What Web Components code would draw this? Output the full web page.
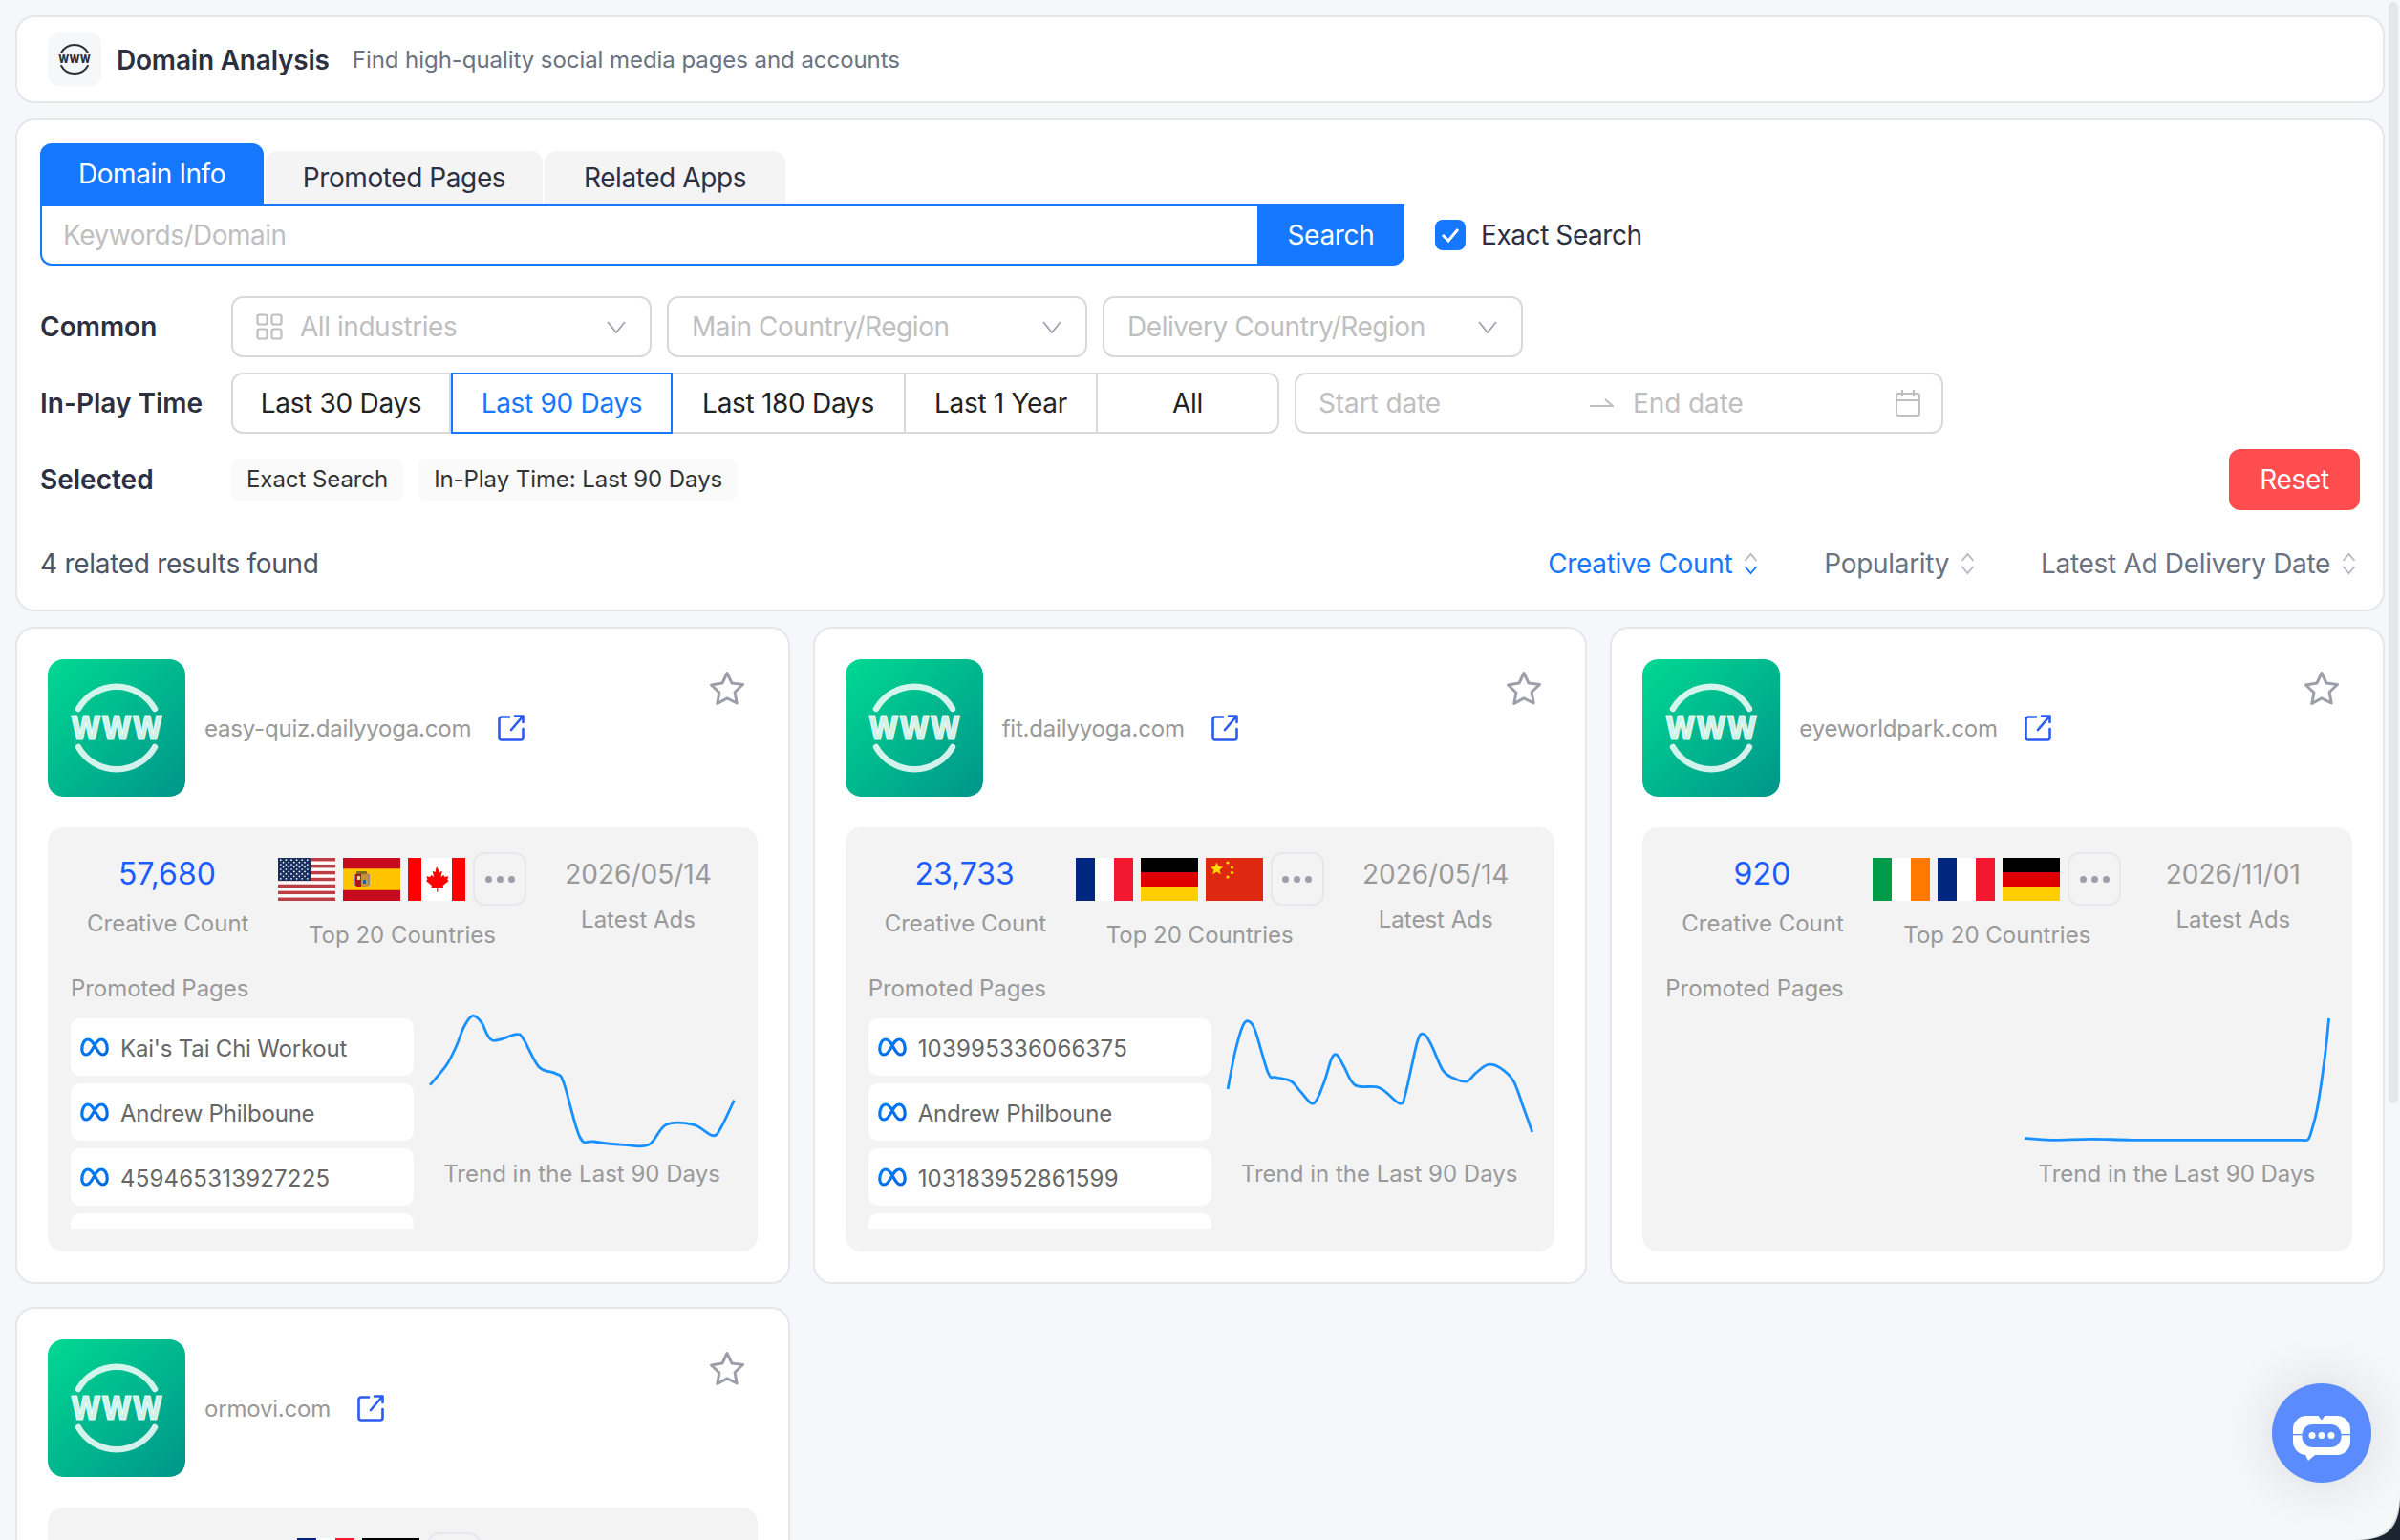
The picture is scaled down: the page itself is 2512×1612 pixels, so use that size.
<!DOCTYPE html>
<html lang="en">
<head>
<meta charset="utf-8">
<title>Domain Analysis</title>
<style>
html,body{margin:0;height:1612px;overflow:hidden;background:#f6f7f9}
body{font-family:Inter,"Liberation Sans",sans-serif;font-size:28px;color:#2c3040}
</style>
</head>
<body>
<app-page>
  <page-header heading="Domain Analysis" subtitle="Find high-quality social media pages and accounts"></page-header>
  <filter-panel></filter-panel>
  <card-grid>
    <domain-card domain="easy-quiz.dailyyoga.com" count="57,680" date="2026/05/14" flags="us,es,ca"
      chart="0,75.7 17.2,55 27.6,35 35.5,15 44.4,3.3 53.8,10 65.3,29 90.4,22.7 98.2,28.3 114,56.7 132.2,64 140,73.3 156.8,130 171.4,135 202.8,138.3 229,138.3 247.3,117.3 276,117.3 296,128.7 304.8,120 318.4,91.7">
      <page-row>Kai's Tai Chi Workout</page-row><page-row>Andrew Philboune</page-row><page-row num>459465313927225</page-row><page-row blank></page-row>
    </domain-card>
    <domain-card domain="fit.dailyyoga.com" count="23,733" date="2026/05/14" flags="fr,de,cn"
      chart="0.1,80 8,40 16,13.3 22.3,9.3 29.2,20 42.4,63.3 50.4,67.7 66.3,71.7 76.8,83.3 90,95 100.7,73.3 108.6,48.3 114.4,44.3 121.9,56.7 133.5,76 158.9,78.7 180,95 186.4,83.3 198.6,30 205.5,22.7 212.9,33.3 225,60 235.7,68.3 250,72 259.5,63.3 272.7,54.3 286,58.3 299.2,71.7 309.8,100 318.8,125">
      <page-row num>103995336066375</page-row><page-row>Andrew Philboune</page-row><page-row num>103183952861599</page-row><page-row blank></page-row>
    </domain-card>
    <domain-card domain="eyeworldpark.com" count="920" date="2026/11/01" flags="ie,fr,de"
      chart="0,131.3 27.8,133.3 70,132.3 112.7,133.3 180,133.3 240,133.3 275,133.3 290,133.3 296.5,133 300,125 306.4,100 314.3,46.7 318.6,6">
    </domain-card>
    <domain-card domain="ormovi.com" flags="fr,de" partial></domain-card>
  </card-grid>
</app-page>
<scroll-thumb></scroll-thumb>
<chat-fab></chat-fab>
<window-corner></window-corner>

<script>
const def = (name, render, after) => customElements.define(name, class extends HTMLElement {
  connectedCallback() {
    if (this.shadowRoot) return;
    const r = this.attachShadow({mode: 'open'});
    r.innerHTML = render(this);
    if (after) after(this, r);
  }
});
const attr = (el, n, d = '') => el.hasAttribute(n) ? el.getAttribute(n) : d;

const wwwMark = (color, op = 1, sw = 6.5, ts = 1.2) => `
  <g fill="none" stroke="${color}" stroke-opacity="${op}" stroke-width="${sw}" stroke-linecap="round">
    <path d="M32 52A46 46 0 0 1 112 52"/><path d="M32 92A46 46 0 0 0 112 92"/>
  </g>
  <text x="72" y="84" text-anchor="middle" textLength="96" lengthAdjust="spacingAndGlyphs"
    font-family="Inter,'Liberation Sans',sans-serif" font-weight="800" font-size="34" fill="${color}" fill-opacity="${op}" stroke="${color}" stroke-opacity="${op}" stroke-width="${ts}" stroke-linejoin="round">WWW</text>`;

def('app-page', () => `<style>:host{display:flex;flex-direction:column;gap:16px;padding:16px 16px 0;width:2480px}</style><slot></slot>`);

def('page-header', el => `<style>
  :host{display:flex;align-items:center;box-sizing:border-box;height:92px;background:#fff;border:2px solid #e5e7eb;border-radius:20px;padding:0 32px}
  .tile{width:56px;height:56px;background:#f6f7f9;border-radius:12px;display:flex;align-items:center;justify-content:center;margin-right:16px}
  h1{margin:2px 0 0;font:600 28px/40px Inter,sans-serif;letter-spacing:-.2px;color:#2c3040}
  p{margin:2px 0 0 24px;font:400 24px/36px Inter,sans-serif;letter-spacing:-.06px;color:#6b7280}
  </style>
  <div class="tile"><svg width="50" height="50" viewBox="0 0 144 144">${wwwMark('#2b2f3a',1,6,0)}</svg></div>
  <h1>${attr(el,'heading')}</h1><p>${attr(el,'subtitle')}</p>`);

const chevron = `<svg width="20" height="13" viewBox="0 0 20 13" fill="none" stroke="#9ca3af" stroke-width="1.8"><path d="M1 1l9 11L19 1"/></svg>`;

def('select-box', el => `<style>
  :host{display:flex;align-items:center;box-sizing:border-box;width:440px;height:64px;border:2px solid #d9d9d9;border-radius:12px;padding:0 25px 0 24px;color:#bfbfbf;font:400 28px/40px Inter,sans-serif;letter-spacing:-.45px;background:#fff}
  span{flex:1;white-space:nowrap}
  svg.g{margin-right:18px;flex:none}
  </style>
  ${el.hasAttribute('grid') ? `<svg class="g" width="28" height="28" viewBox="0 0 28 28" fill="none" stroke="#bfbfbf" stroke-width="2.2"><rect x="1.5" y="1.5" width="10" height="10" rx="2"/><rect x="16.5" y="1.5" width="10" height="10" rx="2"/><rect x="1.5" y="16.5" width="10" height="10" rx="2"/><rect x="16.5" y="16.5" width="10" height="10" rx="2"/></svg>` : ''}
  <span>${attr(el,'label')}</span>${chevron}`);

def('seg-btn', el => `<style>
  :host{display:flex;align-items:center;justify-content:center;box-sizing:border-box;height:64px;width:${attr(el,'w')}px;border:2px solid #d9d9d9;border-left-width:0;color:#222;font:400 28px/40px Inter,sans-serif;letter-spacing:-.3px;white-space:nowrap;background:#fff}
  :host([first]){border-left-width:2px;border-radius:12px 0 0 12px}
  :host([last]){border-radius:0 12px 12px 0}
  :host([active]){border:2px solid #1677ff;color:#1677ff}
  </style><slot></slot>`);

def('date-range', () => `<style>
  :host{display:flex;align-items:center;box-sizing:border-box;width:679px;height:64px;border:2px solid #d9d9d9;border-radius:12px;padding:0 22px 0 23px;color:#bfbfbf;font:400 28px/40px Inter,sans-serif;letter-spacing:-.1px;background:#fff;margin-left:16px}
  .a{width:285px}.c{width:276px}
  svg{flex:none}
  .arrow{margin-right:20px}
  </style>
  <span class="a">Start date</span>
  <svg class="arrow" width="25" height="12" viewBox="0 0 25 12" fill="none" stroke="#bfbfbf" stroke-width="2"><path d="M0 9h24L16 2"/></svg>
  <span class="c">End date</span>
  <svg width="26" height="28" viewBox="0 0 26 28" fill="none" stroke="#bfbfbf" stroke-width="2"><rect x="1" y="4" width="24" height="23" rx="2"/><path d="M1 11h24M7 0v7M19 0v7"/></svg>`);

def('filter-row', el => `<style>
  :host{display:flex;align-items:center;min-height:64px}
  b{width:200px;flex:none;font:600 28px/40px Inter,sans-serif;letter-spacing:0;color:#2c3040}
  .c{display:flex;align-items:center;flex:1}
  </style><b>${attr(el,'label')}</b><div class="c"><slot></slot></div>`);

def('tag-chip', () => `<style>
  :host{display:flex;align-items:center;height:44px;box-sizing:border-box;padding:0 16px;background:#fafafa;border-radius:8px;font:400 24px/36px Inter,sans-serif;letter-spacing:-.07px;color:#333;margin-right:16px;white-space:nowrap}
  </style><slot></slot>`);

def('sort-item', el => `<style>
  :host{display:flex;align-items:center;gap:12px;font:400 28px/40px Inter,sans-serif;letter-spacing:-.32px;color:#6b7280;white-space:nowrap}
  :host([active]){color:#1677ff}
  </style><slot></slot>
  <svg width="15" height="24" viewBox="0 0 15 24" fill="none" stroke-width="1.8"><path d="M1.5 9L7.5 2l6 7" stroke="#b5b9c2"/><path d="M1.5 15l6 7 6-7" stroke="${el.hasAttribute('active') ? '#1677ff' : '#b5b9c2'}"/></svg>`);

def('filter-panel', () => `<style>
  :host{display:block;box-sizing:border-box;height:516px;background:#fff;border:2px solid #e5e7eb;border-radius:20px;padding:24px}
  .tabs{display:flex;align-items:flex-end;height:64px}
  .tab{box-sizing:border-box;height:56px;background:#f4f4f5;border-radius:12px 12px 0 0;display:flex;align-items:center;justify-content:center;font:400 28px/40px Inter,sans-serif;letter-spacing:-.42px;color:#2c3040}
  .tab.on{height:64px;background:#1677ff;color:#fff;width:234px}
  .tab.p{width:290px;margin-left:2px}.tab.r{width:252px;margin-left:2px}
  .search{display:flex;align-items:center;height:64px}
  .input{box-sizing:border-box;width:1274px;height:64px;border:2px solid #1677ff;border-right:0;border-radius:0 0 0 12px;padding:0 22px;display:flex;align-items:center;color:#bfbfbf;font:400 28px/40px Inter,sans-serif;letter-spacing:-.5px}
  .btn{width:154px;height:64px;background:#1677ff;color:#fff;border-radius:0 0 12px 0;display:flex;align-items:center;justify-content:center;font:400 28px/40px Inter,sans-serif;letter-spacing:-.3px}
  .check{display:flex;align-items:center;margin-left:32px;font:400 28px/40px Inter,sans-serif;letter-spacing:-.42px;color:#2c3040}
  .box{width:32px;height:32px;background:#1677ff;border-radius:8px;margin-right:16px;display:flex;align-items:center;justify-content:center}
  .rows{display:flex;flex-direction:column;gap:16px;margin-top:32px}
  select-box+select-box{margin-left:16px}
  .reset{margin-left:auto;width:137px;height:64px;background:#ff4d4f;color:#fff;border-radius:12px;display:flex;align-items:center;justify-content:center;font:400 28px/40px Inter,sans-serif;letter-spacing:-.3px}
  .foot{display:flex;align-items:center;justify-content:space-between;height:40px;margin-top:36px;font:400 28px/40px Inter,sans-serif;letter-spacing:-.28px;color:#4b5563}
  .sorts{display:flex;gap:69px;padding-right:4px}
  </style>
  <div class="tabs"><div class="tab on">Domain Info</div><div class="tab p">Promoted Pages</div><div class="tab r">Related Apps</div></div>
  <div class="search"><div class="input">Keywords/Domain</div><div class="btn">Search</div>
    <div class="check"><span class="box"><svg width="20" height="16" viewBox="0 0 20 16" fill="none" stroke="#fff" stroke-width="3"><path d="M2 8l6 6L18 2"/></svg></span>Exact Search</div></div>
  <div class="rows">
    <filter-row label="Common"><select-box grid label="All industries"></select-box><select-box label="Main Country/Region"></select-box><select-box label="Delivery Country/Region"></select-box></filter-row>
    <filter-row label="In-Play Time"><seg-btn first w="230">Last 30 Days</seg-btn><seg-btn active w="232">Last 90 Days</seg-btn><seg-btn w="244">Last 180 Days</seg-btn><seg-btn w="201">Last 1 Year</seg-btn><seg-btn last w="190">All</seg-btn><date-range></date-range></filter-row>
    <filter-row label="Selected"><tag-chip>Exact Search</tag-chip><tag-chip>In-Play Time: Last 90 Days</tag-chip><span style="flex:1"></span><div class="reset">Reset</div></filter-row>
  </div>
  <div class="foot"><span>4 related results found</span><div class="sorts"><sort-item active>Creative Count</sort-item><sort-item>Popularity</sort-item><sort-item>Latest Ad Delivery Date</sort-item></div></div>`);

def('card-grid', () => `<style>:host{display:grid;grid-template-columns:repeat(3,1fr);gap:24px;align-items:start}</style><slot></slot>`);

const flagArt = {
  us: `<rect width="60" height="45" fill="#fff"/><g fill="#bd3d44">${[0,2,4,6,8,10,12].map(i=>`<rect y="${(i*45/13).toFixed(2)}" width="60" height="3.46"/>`).join('')}</g><rect width="34" height="24" fill="#192f5d"/><g fill="#fff">${[...Array(9)].flatMap((_,r)=>[...Array(r%2?5:6)].map((_,c)=>`<circle cx="${(r%2?5.6:2.8)+c*5.6}" cy="${2.2+r*2.45}" r=".85"/>`)).join('')}</g>`,
  es: `<rect width="60" height="45" fill="#c60b1e"/><rect y="11.25" width="60" height="22.5" fill="#ffc400"/><rect x="13" y="16" width="13" height="14" rx="2" fill="#ad1519"/><rect x="19" y="16" width="7" height="14" fill="#c8913a"/><rect x="14" y="14" width="11" height="3" fill="#8a6a20"/><rect x="11" y="17" width="2" height="12" fill="#8d8d8d"/><rect x="26" y="17" width="2" height="12" fill="#8d8d8d"/><rect x="15" y="19" width="3" height="4" fill="#e8d8a0"/><rect x="21" y="23" width="3" height="4" fill="#2b5b9a"/>`,
  ca: `<rect width="60" height="45" fill="#fff"/><rect width="14" height="45" fill="#f00"/><rect x="46" width="14" height="45" fill="#f00"/><path fill="#f00" d="M30 9l3.2 6 2.600-1.300-1.200 6.400 2.600-2.400 1.200 2.200 3.800-.6-1 3.600 1.600 1-6.200 5 .6 2.600-6-.6.3 4.600h-1.400l.3-4.600-6 .6.6-2.600-6.200-5 1.600-1-1-3.600 3.800.6 1.200-2.200 2.600 2.400-1.200-6.400 2.600 1.300z"/>`,
  fr: `<rect width="20" height="45" fill="#00267f"/><rect x="20" width="20" height="45" fill="#fff"/><rect x="40" width="20" height="45" fill="#f31830"/>`,
  de: `<rect width="60" height="15" fill="#000"/><rect y="15" width="60" height="15" fill="#d00"/><rect y="30" width="60" height="15" fill="#ffce00"/>`,
  ie: `<rect width="20" height="45" fill="#009a49"/><rect x="20" width="20" height="45" fill="#fff"/><rect x="40" width="20" height="45" fill="#ff7900"/>`,
  cn: `<rect width="60" height="45" fill="#de2910"/><g fill="#ffde00"><path d="M11.500 4.500l1.900 4.600 4.900.3-3.800 3.100 1.300 4.800-4.300-2.700-4.200 2.700 1.200-4.800L4.700 9.400l4.900-.3z"/><circle cx="23" cy="5" r="1.600"/><circle cx="27.500" cy="10" r="1.600"/><circle cx="27.500" cy="15.500" r="1.600"/><circle cx="23" cy="20" r="1.600"/></g>`
};
def('flag-icon', el => `<style>:host{display:block;width:60px;height:45px;flex:none}svg{display:block}</style><svg width="60" height="45" viewBox="0 0 60 45">${flagArt[attr(el,'code')]||''}</svg>`);

def('trend-chart', el => {
  const p = attr(el,'points').trim().split(/\s+/).map(s => s.split(',').map(Number));
  let d = `M${p[0]}`;
  for (let i = 0; i < p.length - 1; i++) {
    const a = p[i-1] || p[i], b = p[i], c = p[i+1], e = p[i+2] || c, t = 1/6;
    d += `C${(b[0]+(c[0]-a[0])*t).toFixed(1)} ${(b[1]+(c[1]-a[1])*t).toFixed(1)} ${(c[0]-(e[0]-b[0])*t).toFixed(1)} ${(c[1]-(e[1]-b[1])*t).toFixed(1)} ${c[0]} ${c[1]}`;
  }
  return `<style>:host{display:block;width:320px;height:140px}svg{display:block;overflow:visible}</style>
  <svg width="320" height="140" viewBox="0 0 320 140"><path d="${d}" fill="none" stroke="#1890ff" stroke-width="2.8" stroke-linejoin="round"/></svg>`;
});

def('page-row', el => `<style>
  :host{display:flex;align-items:center;flex:none;height:60px;background:#fff;border-radius:10px;padding-left:10px;gap:12px;font:400 24px/36px Inter,sans-serif;letter-spacing:-.2px;color:#666;white-space:nowrap}
  :host([num]){letter-spacing:.2px}
  span{padding-top:3px}
  svg{flex:none}
  </style>
  ${el.hasAttribute('blank') ? '' : `<svg width="30" height="20" viewBox="0 0 30 20" fill="none" stroke-width="3.200" stroke-linejoin="round"><defs><linearGradient id="m" x1="0" x2="1" y1="0" y2="1"><stop offset="0" stop-color="#0081fb"/><stop offset="1" stop-color="#0064e1"/></linearGradient></defs><path stroke="url(#m)" d="M1.800 12.500C1.800 6 4.500 2 8 2c3.500 0 5.500 3.500 8.500 9 2.500 4.500 4.500 7 7 7 2.800 0 4.700-2.500 4.700-6.500C28.200 6 25.500 2 22 2c-3.500 0-5.500 3.500-8.500 9-2.500 4.500-4.500 7-7 7-2.800 0-4.700-2.500-4.700-5.500z"/></svg>
  <span><slot></slot></span>`}`);

def('domain-card', el => {
  const partial = el.hasAttribute('partial');
  const flags = attr(el,'flags').split(',').map(c => `<flag-icon code="${c}"></flag-icon>`).join('');
  const more = `<div class="more"><i></i><i></i><i></i></div>`;
  const lower = `
    <div class="lower">
      <div class="left"><div class="plabel">Promoted Pages</div><div class="list"><slot></slot></div></div>
      <div class="right"><trend-chart points="${attr(el,'chart')}"></trend-chart><div class="tlabel">Trend in the Last 90 Days</div></div>
    </div>`;
  const stats = partial
    ? `<div class="stats"><div class="c1"></div><div class="c2 shift"><div class="flags">${flags}${more}</div></div></div>`
    : `<div class="stats">
        <div class="c1"><div class="num">${attr(el,'count')}</div><div class="lab">Creative Count</div></div>
        <div class="c2"><div class="flags">${flags}${more}</div><div class="lab">Top 20 Countries</div></div>
        <div class="c3"><div class="date">${attr(el,'date')}</div><div class="lab">Latest Ads</div></div>
      </div>${lower}`;
  return `<style>
  :host{display:block;box-sizing:border-box;background:#fff;border:2px solid #e5e7eb;border-radius:20px;padding:32px;height:688px;min-width:0}
  .top{display:flex;align-items:center;height:144px;position:relative}
  .logo{width:144px;height:144px;border-radius:16px;flex:none;display:block}
  .dom{margin:2px 0 0 20px;font:400 24px/36px Inter,sans-serif;letter-spacing:-.2px;color:#999;white-space:nowrap}
  .ext{margin-left:28px;flex:none}
  .star{position:absolute;right:13px;top:12px}
  .box{margin-top:32px;height:444px;background:#f3f3f4;border-radius:16px;padding-top:26px;box-sizing:border-box}
  .stats{display:flex;gap:32px;height:125px;padding-left:41px;text-align:center}
  .c1{width:168px;flex:none}.c2{width:260px;flex:none}.c3{width:160px;flex:none;margin-left:5px}
  .shift{margin-left:20px}
  .num{font:400 32px/48px Inter,sans-serif;color:#1a5cff;margin-top:-1px}
  .date{font:400 28px/48px Inter,sans-serif;color:#999;margin-top:-1px;white-space:nowrap}
  .lab{font:400 24px/36px Inter,sans-serif;color:#999;white-space:nowrap}
  .c1 .lab{margin-top:10px}.c2 .lab{margin-top:13px}.c3 .lab{margin-top:6px}
  .flags{display:flex;align-items:center;gap:8px;height:56px}
  .more{box-sizing:border-box;width:56px;height:56px;border:2px solid #e6e7ee;border-radius:12px;display:flex;align-items:center;justify-content:center;gap:5px;flex:none}
  .more i{width:7px;height:7px;border-radius:50%;background:#9d9ea9}
  .lower{display:flex;gap:17px;padding-left:24px}
  .left{width:359px;flex:none}
  .plabel{font:400 24px/36px Inter,sans-serif;letter-spacing:-.05px;color:#999}
  .list{margin-top:13px;height:220px;overflow:hidden;display:flex;flex-direction:column;gap:8px}
  .right{padding-top:43px;width:320px}
  .tlabel{margin:11px 0 0 -2px;font:400 24px/36px Inter,sans-serif;color:#999;text-align:center;white-space:nowrap}
  </style>
  <div class="top">
    <svg class="logo" viewBox="0 0 144 144"><defs><linearGradient id="g" x1="0" y1="0" x2="1" y2="1"><stop offset="0" stop-color="#00d992"/><stop offset="1" stop-color="#00958a"/></linearGradient></defs><rect width="144" height="144" rx="16" fill="url(#g)"/>${wwwMark('#fff',.83)}</svg>
    <span class="dom">${attr(el,'domain')}</span>
    <svg class="ext" width="28" height="28" viewBox="0 0 28 28" fill="none" stroke="#2b5bf0" stroke-width="2.600" stroke-linecap="round" stroke-linejoin="round"><path d="M12 2.500H4A2.500 2.500 0 0 0 1.500 5v19A2.500 2.500 0 0 0 4 26.500h20a2.500 2.500 0 0 0 2.500-2.500V15"/><path d="M18 1.500h8.500V8M26 2L14 16"/></svg>
    <svg class="star" width="38" height="38" viewBox="0 0 38 38" fill="none" stroke="#9d9ea9" stroke-width="3" stroke-linejoin="round"><path d="M19 2.500l5 10.500 11.500 1.500-8.400 8 2.100 11.500L19 28.900 8.800 34.500l2.100-11.500-8.400-8L14 13z"/></svg>
  </div>
  <div class="box">${stats}</div>`;
});

def('scroll-thumb', () => `<style>:host{position:absolute;left:2500px;top:2px;width:10px;height:1153px;background:#e6e7eb;border-radius:5px}</style>`);

def('chat-fab', () => `<style>
  :host{position:absolute;left:2378px;top:1448px;width:104px;height:104px;border-radius:50%;background:#5a8cff;box-shadow:0 0 60px rgba(30,35,60,.14);display:flex;align-items:center;justify-content:center}
  svg{margin-top:8px}
  </style>
  <svg width="60" height="50" viewBox="0 0 60 50">
    <path fill="#fff" d="M14 3H46A14 14 0 0 1 60 17V30A14 14 0 0 1 46 44H23l-7 6-3-6A14 14 0 0 1 0 30V17A14 14 0 0 1 14 3z"/>
    <path fill="#5a8cff" d="M26.500 3L30 7.500 33.500 3z"/>
    <rect x="9.500" y="12" width="41" height="24" rx="11" fill="#5a8cff"/>
    <rect x="0" y="22" width="60" height="1.300" fill="#5a8cff"/>
    <g fill="#fff"><circle cx="20" cy="23.500" r="3.500"/><circle cx="30" cy="23.500" r="3.500"/><circle cx="40" cy="23.500" r="3.500"/></g>
  </svg>`);

def('window-corner', () => `<style>:host{position:absolute;left:2452px;top:1552px;width:60px;height:60px}svg{display:block}</style>
  <svg width="60" height="60" viewBox="0 0 60 60"><path d="M60 8C60 44 46 60 10 60H60Z" fill="#c9ccd2" opacity=".6"/><path d="M60 18C59 48 46 59 18 60H60Z" fill="#1b2430"/></svg>`);
</script>
</body>
</html>
